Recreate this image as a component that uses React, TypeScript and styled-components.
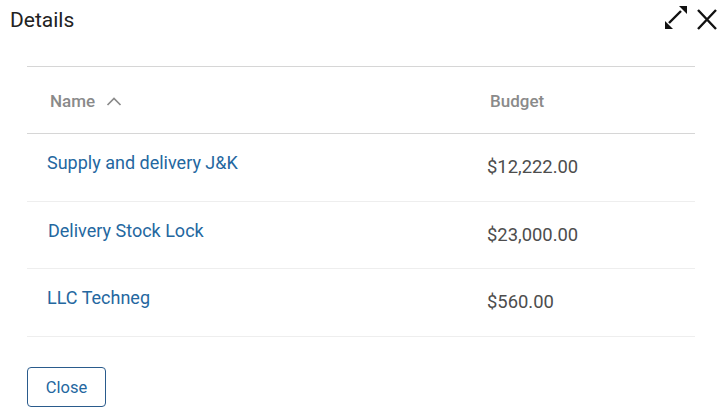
import React from "react";
import styled, { createGlobalStyle } from "styled-components";

const Global = createGlobalStyle`
  html, body { margin: 0; padding: 0; background: #fff; }
  body { font-family: Roboto, "Liberation Sans", Arial, sans-serif; }
`;

const Dialog = styled.div`
  width: 718px;
  height: 413px;
  box-sizing: border-box;
  display: flex;
  flex-direction: column;
  background: #fff;
`;

const Header = styled.div`
  display: flex;
  align-items: flex-start;
  justify-content: space-between;
  height: 66px;
  padding: 0 0 0 10px;
`;

const Title = styled.h1`
  margin: 8px 0 0;
  font-size: 21px;
  font-weight: 400;
  color: #222;
  line-height: 24px;
`;

const IconBar = styled.div`
  display: flex;
  align-items: flex-start;
  gap: 6px;
  padding: 5px 1px 0 0;
`;

const IconButton = styled.button`
  border: none;
  background: none;
  padding: 0;
  margin: 0;
  display: flex;
  cursor: pointer;
`;

const Body = styled.div`
  padding: 0 23px 0 27px;
`;

const Table = styled.div`
  border-top: 1px solid #d6d6d6;
`;

const HeadRow = styled.div`
  display: grid;
  grid-template-columns: 460px 1fr;
  height: 66px;
  align-items: center;
  border-bottom: 1px solid #d6d6d6;
`;

const HeadCell = styled.div<{ $pl: number }>`
  display: flex;
  align-items: center;
  gap: 11px;
  padding-left: ${(p) => p.$pl}px;
  font-size: 17px;
  font-weight: 500;
  color: #8a8a8a;
  padding-top: 1px;
`;

const Row = styled.div`
  display: grid;
  grid-template-columns: 460px 1fr;
  height: 66.6px;
  border-bottom: 1px solid #eeeeee;
`;

const NameCell = styled.a<{ $pl: number }>`
  display: block;
  padding: 18px 0 0 ${(p) => p.$pl}px;
  font-size: 18px;
  line-height: 22px;
  color: #2467a0;
  text-decoration: none;
  cursor: pointer;
`;

const BudgetCell = styled.div`
  padding: 22px 0 0 0;
  font-size: 18.4px;
  line-height: 22px;
  color: #4d4d4d;
`;

const Footer = styled.div`
  padding: 30px 0 0 27px;
`;

const CloseButton = styled.button`
  width: 79px;
  height: 40px;
  box-sizing: border-box;
  padding: 2px 0 0;
  border: 1px solid #2a5b8c;
  border-radius: 4px;
  background: #fff;
  color: #2467a0;
  font-family: inherit;
  font-size: 16.5px;
  cursor: pointer;
`;

const rows = [
  { name: "Supply and delivery J&K", budget: "$12,222.00", pl: 20 },
  { name: "Delivery Stock Lock", budget: "$23,000.00", pl: 21 },
  { name: "LLC Techneg", budget: "$560.00", pl: 20 },
];

export default function App() {
  return (
    <>
      <Global />
      <Dialog>
        <Header>
          <Title>Details</Title>
          <IconBar>
            <IconButton aria-label="Expand">
              <svg width="24" height="24" viewBox="0 0 24 24">
                <line x1="6" y1="18" x2="18" y2="6" stroke="#111" strokeWidth="2.4" />
                <polygon points="2,24 2,16 10,24" fill="#111" />
                <polygon points="24,1 16,1 24,9" fill="#111" />
              </svg>
            </IconButton>
            <IconButton aria-label="Close">
              <svg width="24" height="24" viewBox="0 0 24 24" style={{ marginTop: 3 }}>
                <path d="M5 2 L23 21 M23 2 L5 21" stroke="#111" strokeWidth="2.4" fill="none" />
              </svg>
            </IconButton>
          </IconBar>
        </Header>
        <Body>
          <Table>
            <HeadRow>
              <HeadCell $pl={23}>
                Name
                <svg width="16" height="10" viewBox="0 0 16 10">
                  <path d="M1.5 9 L8 2.5 L14.5 9" stroke="#8a8a8a" strokeWidth="1.7" fill="none" />
                </svg>
              </HeadCell>
              <HeadCell $pl={3}>Budget</HeadCell>
            </HeadRow>
            {rows.map((r) => (
              <Row key={r.name}>
                <NameCell $pl={r.pl}>{r.name}</NameCell>
                <BudgetCell>{r.budget}</BudgetCell>
              </Row>
            ))}
          </Table>
        </Body>
        <Footer>
          <CloseButton>Close</CloseButton>
        </Footer>
      </Dialog>
    </>
  );
}
